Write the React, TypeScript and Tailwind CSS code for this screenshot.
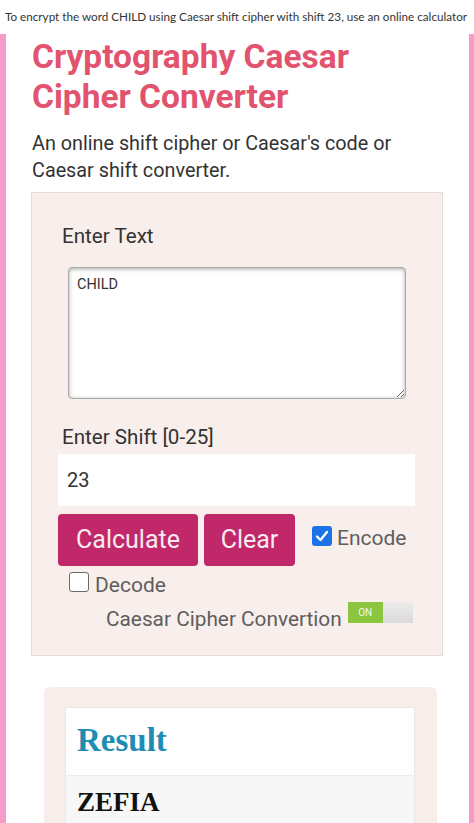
import React from 'react';

const roboto = { fontFamily: 'Roboto, "Liberation Sans", sans-serif' };

function CheckBox({ checked }: { checked: boolean }) {
  if (checked) {
    return (
      <span className="flex h-[20px] w-[20px] items-center justify-center rounded-[3px] bg-[#1a73e8]">
        <svg width="14" height="14" viewBox="0 0 14 14" fill="none">
          <path d="M2 7.5 L5.5 11 L12 3" stroke="white" strokeWidth="2.4" strokeLinecap="round" strokeLinejoin="round" />
        </svg>
      </span>
    );
  }
  return <span className="block h-[20px] w-[20px] rounded-[3px] border-[1.5px] border-[#6b6b6b] bg-white" />;
}

function Toggle() {
  return (
    <div className="flex h-[21px] w-[65px] overflow-hidden">
      <div className="flex w-[35px] items-center justify-center bg-[#8cc63e] text-[10px] leading-none text-[#f2fbe6]" style={roboto}>
        ON
      </div>
      <div className="flex-1 bg-gradient-to-b from-[#ececec] to-[#d9d9d9]" />
    </div>
  );
}

export default function App() {
  return (
    <div className="flex h-[823px] w-[474px] flex-col overflow-hidden bg-white">
      {/* question strip */}
      <div className="flex h-[34px] shrink-0 items-center pl-[5px] text-[11.7px] text-[#333]" style={{ fontFamily: 'Lato, "Open Sans", sans-serif' }}>
        To encrypt the word CHILD using Caesar shift cipher with shift 23, use an online calculator
      </div>

      <div className="flex-1 border-l-[6px] border-r-[5px] border-[#f59ac9] pl-[26px] pr-[26px]" style={roboto}>
        <h1 className="mt-[3px] text-[33.5px] font-bold leading-[40px] text-[#e2536f]">
          Cryptography Caesar
          <br />
          Cipher Converter
        </h1>
        <p className="mt-[13px] text-[19.8px] leading-[27px] text-[#333]">
          An online shift cipher or Caesar's code or
          <br />
          Caesar shift converter.
        </p>

        {/* form */}
        <div className="-ml-px mt-[8px] border border-[#e6dbd7] bg-[#f8eeeb] pb-[25px] pl-[26px] pr-[27px] pt-[31px]">
          <div className="pl-[4px] text-[20.6px] leading-[24px] text-[#333]">Enter Text</div>
          <textarea
            readOnly
            defaultValue="CHILD"
            className="ml-[10px] mt-[19px] block h-[132px] w-[338px] resize-y rounded-[4px] border border-[#a9a9a9] bg-white px-[8px] pt-[8px] text-[14.5px] leading-[18px] text-[#333] shadow-[inset_0_1px_4px_rgba(0,0,0,0.35)] outline-none"
            style={roboto}
          />
          <div className="mt-[26px] pl-[4px] text-[20.6px] leading-[24px] text-[#333]">Enter Shift [0-25]</div>
          <div className="mt-[5px] flex h-[52px] w-[357px] items-center bg-white pl-[9px] text-[20px] text-[#333]">23</div>

          <div className="mt-[8px] flex items-start">
            <button className="h-[52px] w-[140px] rounded-[4px] bg-[#c0286a] text-[25px] text-[#f8eaf0]" style={roboto}>
              Calculate
            </button>
            <button className="ml-[6px] h-[52px] w-[91px] rounded-[4px] bg-[#c0286a] text-[25px] text-[#f8eaf0]" style={roboto}>
              Clear
            </button>
            <div className="ml-[17px] mt-[10px] flex items-center">
              <CheckBox checked />
              <span className="ml-[5px] mt-[4px] text-[21px] leading-[20px] text-[#5e5e5e]">Encode</span>
            </div>
          </div>

          <div className="ml-[11px] mt-[3px] flex items-center">
            <CheckBox checked={false} />
            <span className="ml-[6px] mt-[6px] text-[21px] leading-[20px] text-[#5e5e5e]">Decode</span>
          </div>

          <div className="ml-[48px] mt-[7px] flex items-start">
            <span className="mt-[6px] text-[20.8px] leading-[22px] text-[#5e5e5e]">Caesar Cipher Convertion</span>
            <div className="ml-[6px]">
              <Toggle />
            </div>
          </div>
        </div>

        {/* result */}
        <div className="ml-[12px] mr-[6px] mt-[31px] rounded-[6px] bg-[#f7eeeb] pl-[21px] pr-[22px] pt-[20px]">
          <div className="border border-[#e9e6e4] bg-white">
            <div className="pb-[15px] pl-[11px] pt-[12px] text-[33px] font-bold leading-[40px] text-[#1d8db3]" style={{ fontFamily: '"Liberation Serif", serif' }}>
              Result
            </div>
            <div className="border-t border-[#ececec] bg-[#f7f7f7] pb-[20px] pl-[11px] pt-[9px] text-[27px] font-bold leading-[34px] text-[#111]" style={{ fontFamily: '"Liberation Serif", serif' }}>
              ZEFIA
            </div>
          </div>
        </div>
      </div>
    </div>
  );
}
